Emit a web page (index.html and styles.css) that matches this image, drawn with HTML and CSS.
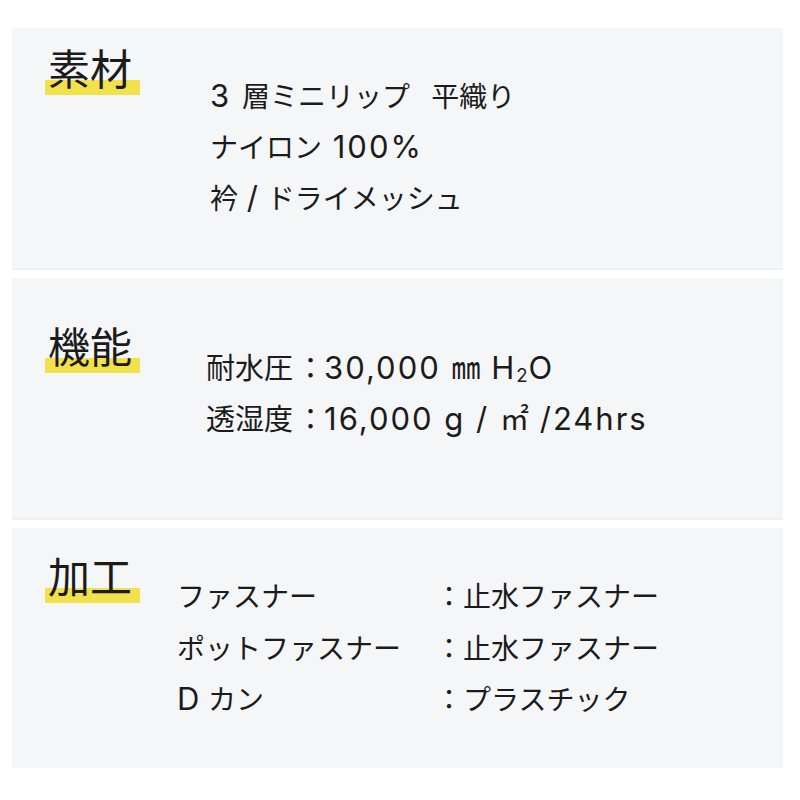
FILE: index.html
```html
<!DOCTYPE html>
<html lang="ja">
<head>
<meta charset="utf-8">
<title>Spec</title>
<link rel="stylesheet" href="styles.css">
</head>
<body>
<main class="spec">
  <section class="panel panel--material">
    <h2 class="panel__title"><span class="mark">素材</span></h2>
    <div class="panel__body">
      <p><span class="lat">3 </span>層ミニリップ<span class="lat">  </span>平織り</p>
      <p>ナイロン<span class="lat"> 100%</span></p>
      <p>衿<span class="lat lat--tight"> / </span>ドライメッシュ</p>
    </div>
  </section>
  <section class="panel panel--function">
    <h2 class="panel__title"><span class="mark">機能</span></h2>
    <div class="panel__body">
      <p>耐水圧<span class="colon">：</span><span class="lat">30,000 </span>㎜<span class="lat"> H<span class="sub">2</span>O</span></p>
      <p>透湿度<span class="colon">：</span><span class="lat">16,000 g / </span>㎡<span class="lat"> /24hrs</span></p>
    </div>
  </section>
  <section class="panel panel--process">
    <h2 class="panel__title"><span class="mark">加工</span></h2>
    <div class="panel__body table">
      <span>ファスナー</span><span>：止水ファスナー</span>
      <span>ポットファスナー</span><span>：止水ファスナー</span>
      <span><span class="lat lat--tight">D </span>カン</span><span>：プラスチック</span>
    </div>
  </section>
</main>
</body>
</html>
```

FILE: styles.css
```css
html, body {
  margin: 0;
  padding: 0;
  background: #ffffff;
}

body {
  font-family: "Noto Sans CJK JP", sans-serif;
  color: #1b1b1b;
}

.spec {
  display: flex;
  flex-direction: column;
  gap: 10px;
  padding: 28px 17px 0 12px;
}

.panel {
  display: flex;
  align-items: flex-start;
  height: 240px;
  background: #f5f6f8;
  box-shadow: 0 2px 0 #eef0f2;
  padding-left: 33px;
  box-sizing: border-box;
}

.panel__title {
  margin: 0;
  font-family: "Noto Sans CJK JP", sans-serif;
  font-weight: 400;
  font-size: 42px;
  line-height: 42px;
  width: 96px;
  white-space: nowrap;
  flex: none;
}

.mark {
  display: inline-block;
  padding: 0 8px 7px 3px;
  background: linear-gradient(to bottom, transparent 34px, #f1e24c 34px);
}

.panel__body {
  font-size: 28px;
  line-height: 51px;
}

.panel__body p {
  margin: 0;
}

.lat {
  font-family: "Inter", "Noto Sans CJK JP", sans-serif;
  font-size: 31px;
  line-height: 1;
  letter-spacing: 2px;
  white-space: pre;
}

.lat--tight {
  letter-spacing: 0;
}

.colon {
  padding-left: 3px;
  margin-right: -1px;
}

.panel--material .panel__title { margin-top: 18px; }
.panel--material .panel__body { margin: 42px 0 0 69px; }

.panel--function .panel__title { margin-top: 46px; }
.panel--function .panel__body { margin: 63px 0 0 65px; font-size: 29px; }
.panel--function .lat { font-size: 31px; }

.panel--process .panel__title { margin-top: 26px; }
.panel--process .panel__body { margin: 42px 0 0 36px; line-height: 51.5px; }

.table {
  display: grid;
  grid-template-columns: 258px auto;
}

.sub {
  font-size: 0.6em;
  vertical-align: -0.15em;
  line-height: 0;
  letter-spacing: 1px;
}
```
